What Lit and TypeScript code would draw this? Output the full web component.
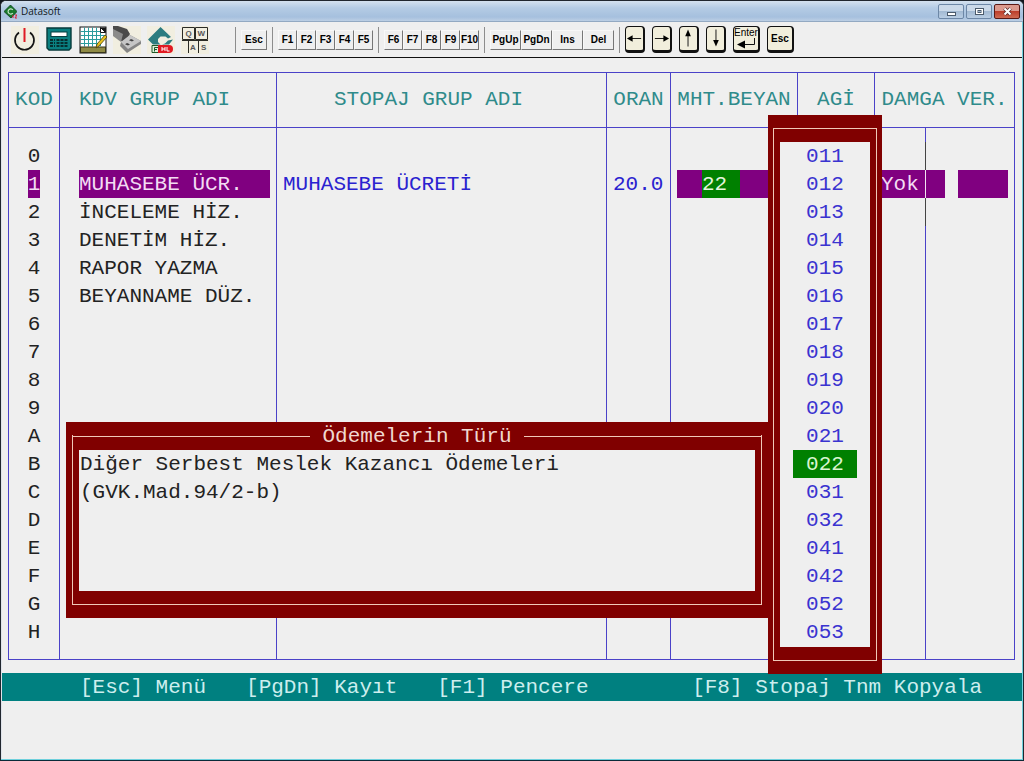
import { LitElement, html, css, svg, nothing } from "lit";
import { customElement } from "lit/decorators.js";
import { classMap } from "lit/directives/class-map.js";

interface Tool {
  label: string;
  art: unknown;
}

const tools: Tool[] = [
  {
    label: "Çıkış",
    art: svg`<rect width="28" height="28" fill="#f1eee0"/>
      <path d="M8 6.500A9.500 9.500 0 1 0 19 6.500" fill="none" stroke="#151515" stroke-width="1.700"/>
      <path d="M13.500 2v14" stroke="#e01b24" stroke-width="2"/>`,
  },
  {
    label: "Hesap makinesi",
    art: svg`<path d="M2 2h24v20l-2 2H4l-2-2z" fill="#0a7f80" stroke="#06393a" stroke-width="1.400"/>
      <rect x="6" y="6" width="16" height="4.500" fill="#fff" stroke="#063f40"/>
      <path d="M5 14h5M5 17h5M5 20h5M11.500 14H23M11.500 17H23M11.500 20H23" stroke="#052f30" stroke-width="2" stroke-dasharray="3 1"/>`,
  },
  {
    label: "Defter",
    art: svg`<rect x="1" y="1" width="26" height="26" fill="#fff" stroke="#151515"/>
      <path d="M1.500 5.500h21M1.500 9.500h24M1.500 13.500h24M1.500 17.500h20M5.500 1.500v19M9.500 1.500v19M13.500 1.500v19M17.500 1.500v19M21.500 5v15" stroke="#2b9c9d" stroke-width="1"/>
      <path d="M21.500 1.500h5.500v5.500z" fill="#151515"/><path d="M21.500 1.500v5h5z" fill="#fff" stroke="#151515"/>
      <rect x="1.500" y="21" width="25" height="5.500" fill="#8f8a45" stroke="#38361c"/>
      <path d="M17 22l1-4 8-9 2 2-8 9z" fill="#e7c11e" stroke="#4a3d0d" stroke-width=".8"/>`,
  },
  {
    label: "USB bellek",
    art: svg`<rect width="28" height="28" fill="#f1eee0"/>
      <path d="M0 0h5l9 3 3 5-6 9-11-8z" fill="#4a4a4a"/>
      <path d="M0 3l10 5-2 8-8-6z" fill="#8b8b8b"/>
      <path d="M8 16l9-7 11 6v3l-14 9-7-7z" fill="#858585"/>
      <path d="M8 16l9-7 11 6-13 8z" fill="#c6c6c6"/>
      <path d="M18 13l3 1.200-2 1.300-3-1.200zM14 17l3 1.200-2 1.300-3-1.200z" fill="#444"/>`,
  },
  {
    label: "Datasoft",
    art: svg`<rect width="28" height="28" fill="#f1eee0"/>
      <path d="M13.500 1L24 11l-3 1.500-2.500-2h-5L11 13v3l2.500 2.500H6L1 13.500z" fill="#2c7c80"/>
      <path d="M15 18.500l3-1 3-3 5-1-4 5z" fill="#2c7c80"/>
      <path d="M5 19.500h8v7H5z" fill="#dff0dd" stroke="#1d5a2a"/>
      <path d="M7.500 25.500v-4H11M7.500 23.500H10" stroke="#1d5a2a" fill="none"/>
      <path d="M11 19h11a4 4 0 0 1 0 8H11z" fill="#e11a22"/>
      <path d="M15 21v4M18 21v4M15 23h3M20 21v4h2.500" stroke="#fff" fill="none"/>`,
  },
  {
    label: "Klavye",
    art: svg`<rect width="28" height="28" fill="#f1eee0"/>
      <path d="M1.500 1.500h12v12h-12zM14.500 1.500h12v12h-12zM7.500 27v-13M17.500 27v-13M27 14.500H1" fill="none" stroke="#2b2b25"/>
      <text x="4.500" y="10" font-size="8">Q</text><text x="16.500" y="10" font-size="8">W</text>
      <text x="9" y="24" font-size="8">A</text><text x="20" y="24" font-size="8">S</text>`,
  },
];

const keyGroups: { wide?: boolean; keys: string[] }[] = [
  { keys: ["F1", "F2", "F3", "F4", "F5"] },
  { keys: ["F6", "F7", "F8", "F9", "F10"] },
  { wide: true, keys: ["PgUp", "PgDn", "Ins", "Del"] },
];

const arrows: Tool[] = [
  { label: "Sol", art: svg`<path d="M6 11.500h10" stroke="#111"/><path d="M1 11.500l6-3.500v7z"/>` },
  { label: "Sağ", art: svg`<path d="M2 11.500h10" stroke="#111"/><path d="M17 11.500l-6-3.500v7z"/>` },
  { label: "Yukarı", art: svg`<path d="M8.500 20V7" stroke="#111"/><path d="M8.500 2L5.500 9h6z"/>` },
  { label: "Aşağı", art: svg`<path d="M9.500 2v13" stroke="#111"/><path d="M9.500 20l-3-7h6z"/>` },
];

const groups = ["", "MUHASEBE ÜCR.", "İNCELEME HİZ.", "DENETİM HİZ.", "RAPOR YAZMA", "BEYANNAME DÜZ."];
const codes = [..."0123456789ABCDEFGH"];
const types = ["011", "012", "013", "014", "015", "016", "017", "018", "019", "020", "021", "022", "031", "032", "041", "042", "052", "053"];

@customElement("app-root")
export class AppRoot extends LitElement {
  static styles = css`
    :host {
      display: block;
      min-height: 100vh;
      background: #10151c;
      font-family: "Liberation Mono", monospace;
      font-size: 21px;
      line-height: 26px;
    }
    * { box-sizing: border-box; }
    button, input { font: inherit; color: inherit; border: 0; margin: 0; padding: 0; border-radius: 0; background: none; }
    .window {
      min-height: 100vh;
      display: flex;
      flex-direction: column;
      background: #efefef;
      border: 1px solid #20262e;
      border-bottom-color: #0a2a38;
      border-radius: 6px 6px 0 0;
      overflow: hidden;
      box-shadow: inset -1px -1px 0 #6fd0dc, inset 1px 0 0 #dfe3ea;
    }
    .title {
      display: flex;
      align-items: center;
      height: 21px;
      padding: 0 3px;
      gap: 4px;
      background: linear-gradient(#d4e1ef 0, #b4cbe4 35%, #a6c0de 80%, #bccfe4 100%);
      border-bottom: 1px solid #93a9c2;
      font: 10px/14px "Open Sans", sans-serif;
      color: #101820;
    }
    .title svg { width: 13px; height: 15px; }
    .title h1 { flex: 1; margin: 0; font: inherit; }
    .controls { display: flex; gap: 2px; align-self: flex-start; padding-top: 3px; }
    .control {
      width: 26px;
      height: 15px;
      border: 1px solid #6d87a6;
      border-radius: 2px;
      background: linear-gradient(#cbd9e9 45%, #a3bad3 50%, #b9cde3);
    }
    .close { border-color: #5a1a16; background: linear-gradient(#dc9a8e 45%, #bd3f2c 50%, #cf6a52); }
    .control svg { display: block; width: 24px; height: 13px; }
    .bar {
      display: flex;
      align-items: center;
      height: 36px;
      margin: 0 1px;
      padding: 0 9px;
      border-bottom: 1px solid #111;
      font: bold 10px/14px "Liberation Sans", sans-serif;
      color: #000;
    }
    .tools { display: flex; gap: 6px; padding-right: 21px; }
    .tool, .tool svg { display: block; width: 28px; height: 28px; }
    .tool text { fill: #555; }
    .sep { width: 1px; height: 26px; background: #8d8d8d; margin: 0 5px; }
    .keys { display: flex; }
    .key {
      width: 19px;
      height: 20px;
      border: 1px solid #777;
      border-top-color: #f8f8f8;
      border-left-color: #f8f8f8;
      white-space: nowrap;
      display: flex;
      align-items: center;
      justify-content: center;
      overflow: hidden;
    }
    .mid { width: 26px; }
    .wide .key { width: 31px; }
    .caps { display: flex; gap: 7px; }
    .cap {
      width: 20px;
      height: 27px;
      border: 1px solid #111;
      border-width: 1px 2px 3px 1px;
      border-radius: 4px;
      background: #f1eedc;
      overflow: hidden;
    }
    .cap svg { display: block; width: 100%; height: 23px; }
    .big { width: 27px; }
    .enter { font-weight: normal; line-height: 10px; }
    .enter svg { height: 12px; }
    main { flex: 1; padding: 14px 1px 0; }
    .board { position: relative; margin: 0 7px 0 6px; }
    table { width: 100%; table-layout: fixed; border-collapse: collapse; border: 1px solid #4a42c8; }
    .kod { width: 51px; }
    .kdv { width: 217px; }
    .oran { width: 64px; }
    .mht { width: 127px; }
    .agi { width: 77px; }
    .dmg { width: 51px; }
    .ver { width: 89px; }
    th, td { padding: 2px 0 0; border-left: 1px solid #4a42c8; border-right: 1px solid #4a42c8; white-space: pre; }
    th { height: 55px; padding-top: 0; border-bottom: 1px solid #4a42c8; font-weight: normal; color: #2f8b8b; }
    th.start { text-align: left; padding-left: 19px; }
    th.wideset { padding-right: 26px; }
    td { height: 28px; color: #2a22d0; text-align: left; }
    .edge td { height: 14px; padding: 0; }
    td.code { text-align: center; color: #222; }
    td.name { padding-left: 19px; color: #222; }
    td.stopaj, td.rate { padding-left: 6px; }
    .mark { display: inline-block; margin-top: -2px; padding-top: 2px; height: 28px; background: #800080; color: #f3dcf3; vertical-align: top; }
    td.field { padding: 0; }
    .strip { display: flex; height: 28px; color: #f3dcf3; }
    .strip input { display: block; height: 28px; padding: 2px 0 0; background: #800080; outline: 0; min-width: 0; }
    .name .strip { margin-top: -2px; margin-right: 6px; }
    .name input { flex: 1; }
    .mhtstrip { margin-left: 6px; }
    .mhtstrip i { flex: 1; background: #800080; }
    .mhtstrip i.lead { flex: 0 0 25px; }
    .strip .current { width: 38px; background: #008000; color: #e2f5dc; }
    .yok { padding-left: 6px; }
    .yok input { flex: 1; }
    .tail { width: 19px; background: #800080; margin-right: 13px; }
    .verstrip { padding-right: 6px; }
    .verstrip input { flex: 1; }
    tr.cursor td.fork { border-right-color: #444; }
    tr.active td.fork { border-right-color: #f1e4f1; }
    .pop { position: absolute; background: #800000; color: #f0d8d0; }
    .pop .frame { border: 1px solid #f0c8b8; height: 100%; }
    .pop .paper { background: #efefef; height: 100%; }
    .info { left: 58px; right: 247px; top: 350px; height: 196px; padding: 13px 6px; }
    .info .frame { border-top: 0; padding: 15px 6px 13px; position: relative; }
    .info h2 { position: absolute; left: 0; right: 0; top: -13px; margin: 0; padding-top: 2px; display: flex; align-items: center; gap: 12px; font: inherit; }
    .info h2::before, .info h2::after { content: ""; flex: 1; height: 1px; margin-top: -2px; background: #f0c8b8; }
    .info p { margin: 0; padding: 1px 0 0 1px; color: #222; line-height: 28px; white-space: pre-line; }
    .list { right: 133px; width: 114px; top: 43px; height: 559px; padding: 13px 5px; }
    .list .frame { padding: 13px 6px; }
    ul { list-style: none; margin: 0; padding: 0 13px; }
    li { height: 28px; padding-top: 2px; text-align: center; color: #3a33d0; }
    li.chosen { background: #008000; color: #d8f5d0; }
    footer { display: flex; margin-top: 13px; height: 28px; padding: 2px 40px 0 78px; background: #008080; color: #cdeeee; white-space: nowrap; }
    footer button { height: 26px; }
    .save { margin-left: 40px; }
    .win { margin-left: 40px; }
    .copy { margin-left: auto; }
  `;

  private svgIcon(t: Tool, box: string) {
    return html`<svg viewBox=${box} aria-hidden="true">${t.art}</svg>`;
  }

  private row(code: string, i: number) {
    const active = i === 1;
    return html`<tr class=${classMap({ active, cursor: i < 3 })}>
      <td class="code">${active ? html`<span class="mark">${code}</span>` : code}</td>
      <td class="name">${active
        ? html`<div class="strip"><input aria-label="KDV grup adı" size="1" .value=${groups[i]} /></div>`
        : groups[i] ?? nothing}</td>
      <td class="stopaj">${active ? "MUHASEBE ÜCRETİ" : nothing}</td>
      <td class="rate">${active ? "20.0" : nothing}</td>
      <td class="field">${active
        ? html`<div class="strip mhtstrip"><i class="lead"></i><input class="current" aria-label="Muhtasar beyan" .value=${"22"} /><i></i></div>`
        : nothing}</td>
      <td></td>
      <td class="field fork">${active
        ? html`<div class="strip yok"><input aria-label="Damga" size="1" .value=${"Yok"} /></div>`
        : nothing}</td>
      <td class="field">${active
        ? html`<div class="strip verstrip"><span class="tail"></span><input aria-label="Vergi" size="1" /></div>`
        : nothing}</td>
    </tr>`;
  }

  private edge() {
    return html`<tr class="edge"><td></td><td></td><td></td><td></td><td></td><td></td><td></td><td></td></tr>`;
  }

  render() {
    return html`<div class="window">
      <header class="title">
        <svg viewBox="0 0 13 15" aria-hidden="true">
          <path d="M6.500 1L13 7.500 7 14 0 7.500z" fill="#187a2c" stroke="#0b3d16" stroke-width=".8"/>
          <path d="M8.800 6a2.600 2.600 0 1 0 0 3" fill="none" stroke="#cfe8d0" stroke-width="1.100"/>
          <path d="M9 11v3M11 11h2l-2 3h2" fill="none" stroke="#e0203a"/>
        </svg>
        <h1>Datasoft</h1>
        <div class="controls">
          <button class="control" aria-label="Simge durumuna küçült"><svg viewBox="0 0 24 13"><rect x="8.500" y="7.500" width="8" height="3" fill="#fff" stroke="#4b5a6b"/></svg></button>
          <button class="control" aria-label="Ekranı kapla"><svg viewBox="0 0 24 13"><rect x="8.500" y="3.500" width="8" height="6" fill="#fff" stroke="#4b5a6b"/><rect x="11" y="5.500" width="3" height="2" fill="#9fb5cf" stroke="#4b5a6b"/></svg></button>
          <button class="control close" aria-label="Kapat"><svg viewBox="0 0 24 13"><path d="M9.500 3.500l6 6M15.500 3.500l-6 6" stroke="#5a2a2a" stroke-width="3.600"/><path d="M9.500 3.500l6 6M15.500 3.500l-6 6" stroke="#fff" stroke-width="2"/></svg></button>
        </div>
      </header>
      <nav class="bar">
        <div class="tools">${tools.map((t) => html`<button class="tool" aria-label=${t.label}>${this.svgIcon(t, "0 0 28 28")}</button>`)}</div>
        <span class="sep"></span>
        <button class="key mid">Esc</button>
        ${keyGroups.map((g) => html`<span class="sep"></span>
          <div class=${classMap({ keys: true, wide: !!g.wide })}>${g.keys.map((k) => html`<button class="key">${k}</button>`)}</div>`)}
        <span class="sep"></span>
        <div class="caps">
          ${arrows.map((t) => html`<button class="cap" aria-label=${t.label}>${this.svgIcon(t, "0 0 18 23")}</button>`)}
          <button class="cap big enter">Enter<svg viewBox="0 0 24 12" aria-hidden="true"><path d="M20.500 0v6.500H9" fill="none" stroke="#111"/><path d="M3 6.500L11 2.500v8z"/></svg></button>
          <button class="cap big">Esc</button>
        </div>
      </nav>
      <main>
        <div class="board">
          <table>
            <colgroup><col class="kod" /><col class="kdv" /><col /><col class="oran" /><col class="mht" /><col class="agi" /><col class="dmg" /><col class="ver" /></colgroup>
            <thead><tr>
              <th>KOD</th><th class="start">KDV GRUP ADI</th><th class="wideset">STOPAJ GRUP ADI</th><th>ORAN</th><th>MHT.BEYAN</th><th>AGİ</th><th colspan="2">DAMGA VER.</th>
            </tr></thead>
            <tbody>${this.edge()}${codes.map((c, i) => this.row(c, i))}${this.edge()}</tbody>
          </table>
          <section class="pop info">
            <div class="frame"><h2>Ödemelerin Türü</h2>
              <div class="paper"><p>Diğer Serbest Meslek Kazancı Ödemeleri
(GVK.Mad.94/2-b)</p></div></div>
          </section>
          <div class="pop list"><div class="frame"><div class="paper">
            <ul role="listbox" aria-label="Ödeme türü kodu">${types.map((t) => html`<li role="option" aria-selected=${t === "022"} class=${classMap({ chosen: t === "022" })}>${t}</li>`)}</ul>
          </div></div></div>
        </div>
        <footer>
          <button>[Esc] Menü</button><button class="save">[PgDn] Kayıt</button><button class="win">[F1] Pencere</button><button class="copy">[F8] Stopaj Tnm Kopyala</button>
        </footer>
      </main>
    </div>`;
  }
}
